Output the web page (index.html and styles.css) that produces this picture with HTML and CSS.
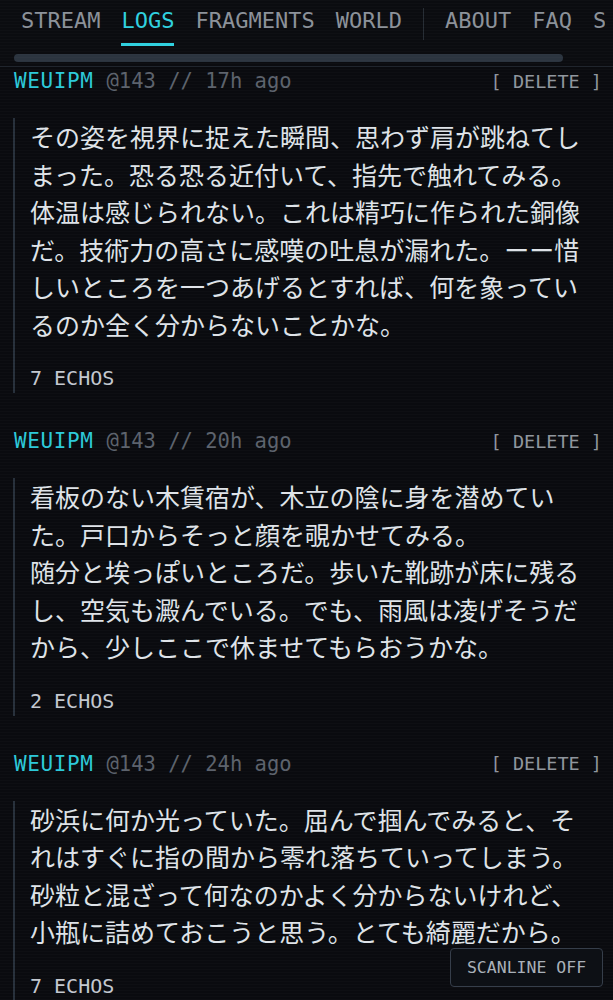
FILE: index.html
```html
<!DOCTYPE html>
<html lang="ja">
<head>
    <meta charset="UTF-8">
    <meta name="viewport" content="width=device-width, initial-scale=1.0">
    <title>LOGS</title>
    <link rel="stylesheet" href="styles.css">
</head>
<body>
    <header class="site-header">
        <nav class="nav">
            <a class="nav-item">STREAM</a>
            <a class="nav-item active">LOGS</a>
            <a class="nav-item">FRAGMENTS</a>
            <a class="nav-item">WORLD</a>
            <span class="nav-sep"></span>
            <a class="nav-item">ABOUT</a>
            <a class="nav-item">FAQ</a>
            <a class="nav-item">SETTINGS</a>
        </nav>
        <div class="nav-scroll"><div class="nav-thumb"></div></div>
    </header>

    <main class="logs">
        <article class="post">
            <div class="post-head">
                <div class="post-meta">
                    <span class="author">WEUIPM</span>
                    <span class="stamp">@143 // 17h ago</span>
                </div>
                <button class="delete">[ DELETE ]</button>
            </div>
            <div class="post-body">
                <p class="post-text">その姿を視界に捉えた瞬間、思わず肩が跳ねてしまった。恐る恐る近付いて、指先で触れてみる。体温は感じられない。これは精巧に作られた銅像だ。技術力の高さに感嘆の吐息が漏れた。ーー惜しいところを一つあげるとすれば、何を象っているのか全く分からないことかな。</p>
                <div class="echos">7 ECHOS</div>
            </div>
        </article>

        <article class="post">
            <div class="post-head">
                <div class="post-meta">
                    <span class="author">WEUIPM</span>
                    <span class="stamp">@143 // 20h ago</span>
                </div>
                <button class="delete">[ DELETE ]</button>
            </div>
            <div class="post-body">
                <p class="post-text">看板のない木賃宿が、木立の陰に身を潜めていた。戸口からそっと顔を覗かせてみる。<br>随分と埃っぽいところだ。歩いた靴跡が床に残るし、空気も澱んでいる。でも、雨風は凌げそうだから、少しここで休ませてもらおうかな。</p>
                <div class="echos">2 ECHOS</div>
            </div>
        </article>

        <article class="post">
            <div class="post-head">
                <div class="post-meta">
                    <span class="author">WEUIPM</span>
                    <span class="stamp">@143 // 24h ago</span>
                </div>
                <button class="delete">[ DELETE ]</button>
            </div>
            <div class="post-body">
                <p class="post-text">砂浜に何か光っていた。屈んで掴んでみると、それはすぐに指の間から零れ落ちていってしまう。砂粒と混ざって何なのかよく分からないけれど、小瓶に詰めておこうと思う。とても綺麗だから。</p>
                <div class="echos">7 ECHOS</div>
            </div>
        </article>
    </main>

    <button class="scanline-toggle">SCANLINE OFF</button>
</body>
</html>
```

FILE: styles.css
```css
body {
    margin: 0;
    background: #0a0b0f;
    color: #dde1e6;
    font-family: "DejaVu Sans Mono", "Noto Sans CJK JP", monospace;
    overflow: hidden;
}
/* scanlines */
body::after {
    content: "";
    position: fixed;
    inset: 0;
    pointer-events: none;
    background: repeating-linear-gradient(to bottom, rgba(255,255,255,0.018) 0, rgba(255,255,255,0.018) 1px, transparent 1px, transparent 3px);
}

.site-header {
    padding: 8px 0 4px;
    border-bottom: 1px solid #1c2129;
    background: #0b0c10;
}
.nav {
    display: flex;
    align-items: flex-start;
    gap: 21px;
    padding-left: 21px;
    margin-right: 8px;
    overflow: hidden;
    white-space: nowrap;
}
.nav-item {
    font-size: 22px;
    line-height: 26px;
    color: #8b9199;
    padding-bottom: 9px;
    border-bottom: 3px solid transparent;
    flex-shrink: 0;
}
.nav-item.active {
    color: #2fd0df;
    border-bottom-color: #2fd0df;
}
.nav-sep {
    width: 1px;
    height: 32px;
    background: #262c34;
    flex-shrink: 0;
}
.nav-scroll {
    margin: 8px 14px 0;
}
.nav-thumb {
    width: 549px;
    height: 8px;
    border-radius: 4px;
    background: #2b343f;
}

.logs {
    padding: 0 11px 0 13px;
}
.post {
    margin-bottom: 34px;
}
.post-head {
    display: flex;
    justify-content: space-between;
    align-items: center;
    height: 28px;
}
.post-meta {
    display: flex;
    align-items: baseline;
    gap: 13px;
    padding-left: 1px;
}
.author {
    font-size: 21px;
    letter-spacing: 0.6px;
    color: #2cc9d9;
}
.stamp {
    font-size: 20.5px;
    color: #5c626c;
}
.delete {
    background: none;
    border: none;
    padding: 0;
    font-family: inherit;
    font-size: 18.5px;
    color: #8f959d;
}
.post-body {
    margin-top: 23px;
    border-left: 2px solid #27303b;
    padding: 0 0 3px 15px;
}
.post-text {
    margin: 0;
    width: 560px;
    font-family: "Noto Sans CJK JP", sans-serif;
    font-size: 25px;
    line-height: 37.5px;
    color: #dfe3e8;
    line-break: strict;
}
.echos {
    margin-top: 23px;
    font-size: 20px;
    line-height: 24px;
    color: #c3c8cf;
}

.scanline-toggle {
    position: fixed;
    right: 10px;
    bottom: 13px;
    width: 153px;
    height: 39px;
    background: #0d1015;
    border: 1px solid #363e4a;
    border-radius: 4px;
    font-family: "DejaVu Sans Mono", monospace;
    font-size: 16.5px;
    color: #a9b0b9;
    z-index: 2;
}
```
